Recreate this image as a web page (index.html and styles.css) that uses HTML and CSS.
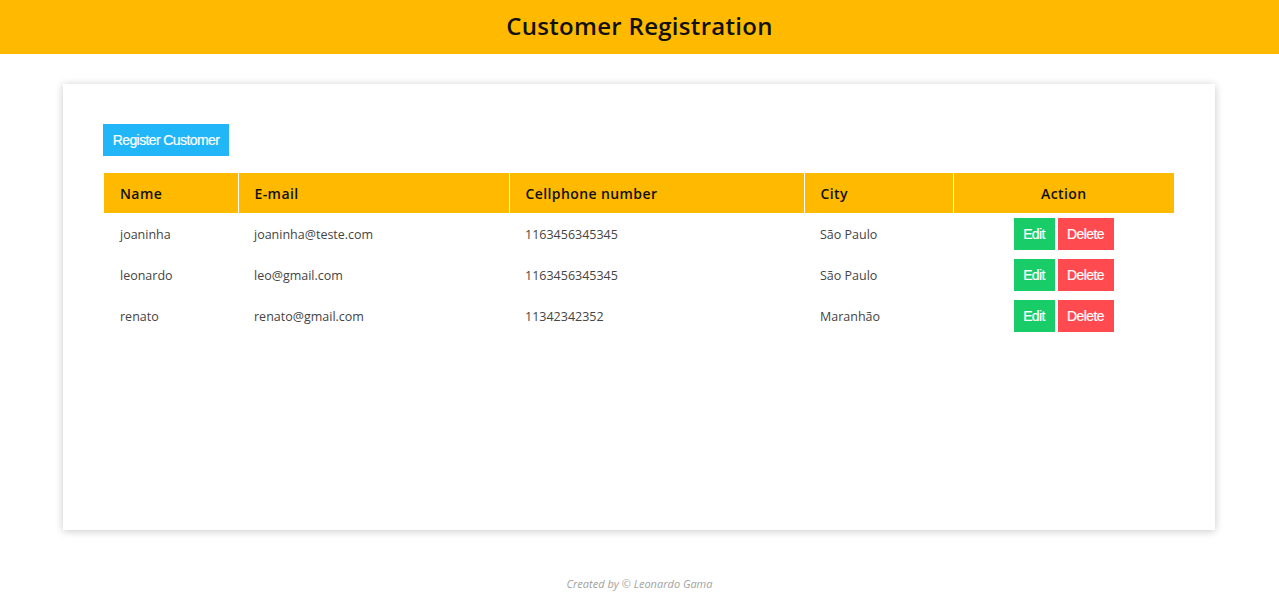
FILE: index.html
```html
<!DOCTYPE html>
<html>
<head>
<meta charset="utf-8">
<link rel="stylesheet" href="styles.css">
</head>
<body>
<header class="topbar"><h1 class="title">Customer Registration</h1></header>
<main class="card">
  <button class="btn btn-primary">Register Customer</button>
  <table class="records">
    <thead>
      <tr>
        <th class="c-name">Name</th>
        <th class="c-mail">E-mail</th>
        <th class="c-phone">Cellphone number</th>
        <th class="c-city">City</th>
        <th class="c-action">Action</th>
      </tr>
    </thead>
    <tbody>
      <tr>
        <td>joaninha</td><td>joaninha@teste.com</td><td>1163456345345</td><td>São Paulo</td>
        <td class="actions"><button class="btn btn-edit">Edit</button><button class="btn btn-delete">Delete</button></td>
      </tr>
      <tr>
        <td>leonardo</td><td>leo@gmail.com</td><td>1163456345345</td><td>São Paulo</td>
        <td class="actions"><button class="btn btn-edit">Edit</button><button class="btn btn-delete">Delete</button></td>
      </tr>
      <tr>
        <td>renato</td><td>renato@gmail.com</td><td>11342342352</td><td>Maranhão</td>
        <td class="actions"><button class="btn btn-edit">Edit</button><button class="btn btn-delete">Delete</button></td>
      </tr>
    </tbody>
  </table>
</main>
<footer class="footer">Created by © Leonardo Gama</footer>
</body>
</html>
```

FILE: styles.css
```css
* { box-sizing: border-box; }
html, body { margin: 0; padding: 0; }
body {
  font-family: "Open Sans", "DejaVu Sans", sans-serif;
  background: #fff;
  color: #333;
}
.topbar {
  background: #ffba00;
  height: 54px;
  display: flex;
  align-items: center;
  justify-content: center;
  padding-bottom: 4px;
}
.title {
  margin: 0;
  font-size: 24px;
  font-weight: 600;
  color: #111;
  letter-spacing: 0.3px;
}
.card {
  width: 1152px;
  height: 446px;
  margin: 30px 0 0 63px;
  padding: 40px;
  background: #fff;
  box-shadow: 0 1px 8px rgba(0,0,0,0.22);
}
.btn {
  border: none;
  font-family: "Liberation Sans", Arial, sans-serif;
  font-size: 14px;
  letter-spacing: -0.6px;
  color: #fff;
  cursor: pointer;
  height: 32px;
  padding: 0;
  -webkit-text-stroke: 0.2px #fff;
}
.btn-primary { background: #21b6f8; width: 126px; }
.records {
  margin-top: 17px;
  margin-left: 1px;
  width: 1070px;
  border-collapse: collapse;
  table-layout: fixed;
}
.records th {
  background: #ffba00;
  height: 40px;
  text-align: left;
  padding: 0 16px;
  font-size: 14px;
  font-weight: 600;
  color: #111;
  letter-spacing: 0.4px;
  border-left: 1px solid #fff;
}
.records th:first-child { border-left: none; }
.records th.c-action { text-align: center; }
.c-name { width: 134px; }
.c-mail { width: 271px; }
.c-phone { width: 295px; }
.c-city { width: 149px; }
.c-action { width: 221px; }
.records td {
  height: 41px;
  padding: 2px 16px 0;
  font-size: 12.5px;
  color: #444;
}
.records td.actions { text-align: center; padding: 0; }
.btn-edit { background: #18cc68; width: 41px; }
.btn-delete { background: #ff4a4f; width: 56px; margin-left: 3px; }
.footer {
  text-align: center;
  font-size: 11px;
  font-style: italic;
  font-weight: 400;
  color: #a2a2a2;
  margin-top: 46px;
}
```
